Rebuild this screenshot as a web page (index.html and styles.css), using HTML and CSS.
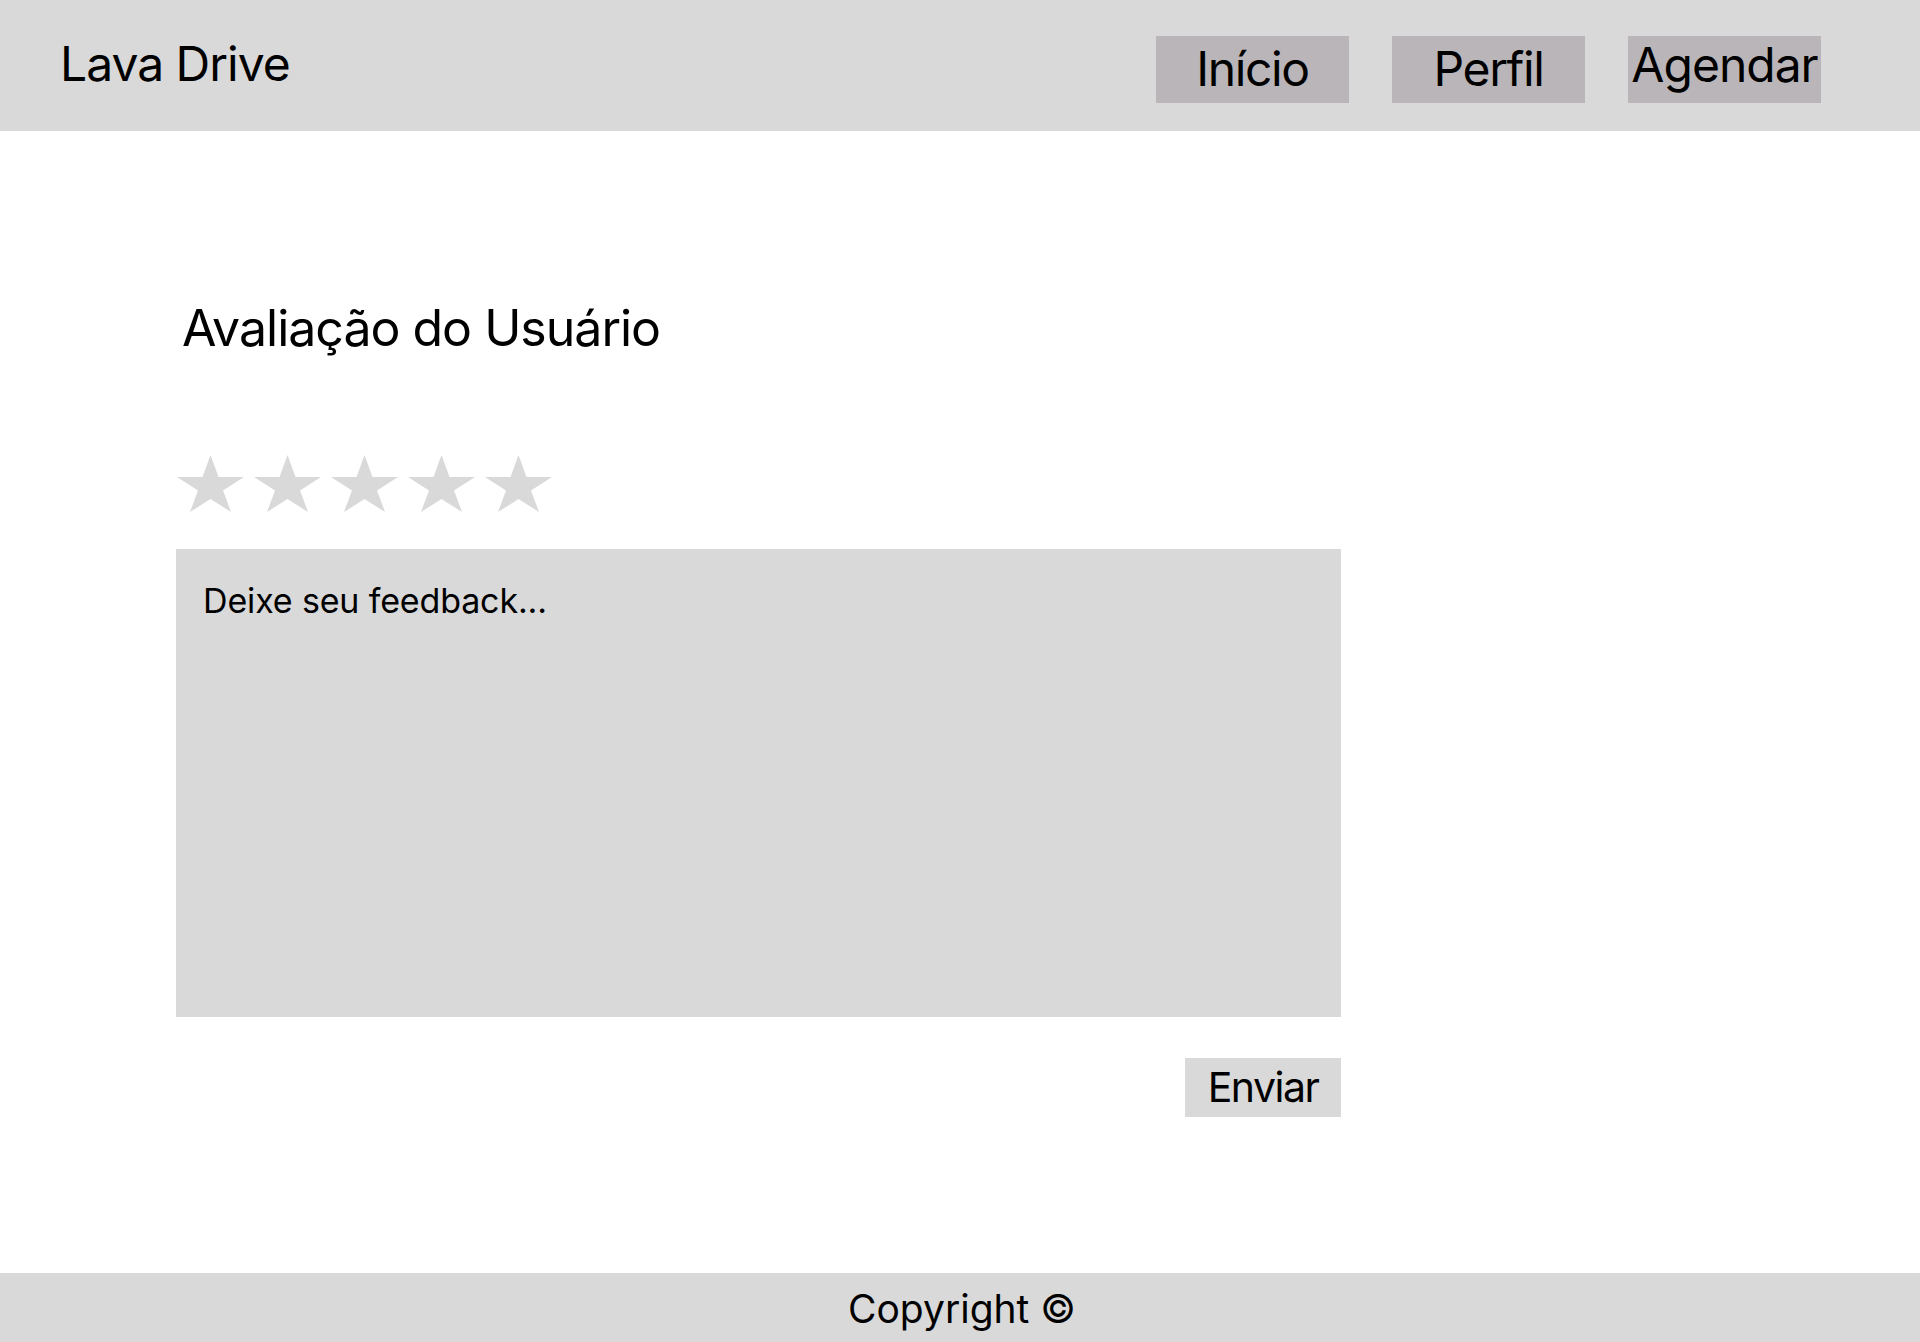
FILE: index.html
```html
<!DOCTYPE html>
<html lang="pt-BR">
<head>
<meta charset="utf-8">
<title>Lava Drive - Avaliação</title>
<link rel="stylesheet" href="styles.css">
</head>
<body>
<div class="page">
  <header class="topbar">
    <div class="logo">Lava Drive</div>
    <nav class="nav">
      <a class="nav-btn" href="#"><span class="nav-label">Início</span></a>
      <a class="nav-btn" href="#"><span class="nav-label">Perfil</span></a>
      <a class="nav-btn nav-btn--raised" href="#"><span class="nav-label">Agendar</span></a>
    </nav>
  </header>
  <main class="content">
    <h1 class="title">Avaliação do Usuário</h1>
    <div class="stars">
      <svg class="star" viewBox="0 0 67 57"><polygon points="33.5,0 41.5,22 67,22 46,35.5 54,57 33.5,44 13,57 21,35.5 0,22 25.5,22"/></svg>
      <svg class="star" viewBox="0 0 67 57"><polygon points="33.5,0 41.5,22 67,22 46,35.5 54,57 33.5,44 13,57 21,35.5 0,22 25.5,22"/></svg>
      <svg class="star" viewBox="0 0 67 57"><polygon points="33.5,0 41.5,22 67,22 46,35.5 54,57 33.5,44 13,57 21,35.5 0,22 25.5,22"/></svg>
      <svg class="star" viewBox="0 0 67 57"><polygon points="33.5,0 41.5,22 67,22 46,35.5 54,57 33.5,44 13,57 21,35.5 0,22 25.5,22"/></svg>
      <svg class="star" viewBox="0 0 67 57"><polygon points="33.5,0 41.5,22 67,22 46,35.5 54,57 33.5,44 13,57 21,35.5 0,22 25.5,22"/></svg>
    </div>
    <textarea class="feedback" placeholder="Deixe seu feedback..."></textarea>
    <div class="actions">
      <button class="send" type="button">Enviar</button>
    </div>
  </main>
  <footer class="footer">Copyright ©</footer>
</div>
</body>
</html>
```
FILE: styles.css
```css
* { box-sizing: border-box; }
html, body { margin: 0; padding: 0; }
body {
  font-family: Inter, "Noto Sans", sans-serif;
  color: #000;
  background: #fff;
}
.page {
  min-height: 1342px;
  display: flex;
  flex-direction: column;
}
.topbar {
  height: 131px;
  background: #d9d9d9;
  display: flex;
  align-items: flex-start;
  justify-content: space-between;
  padding: 0 99px 0 60px;
}
.logo {
  font-size: 48px;
  letter-spacing: -1px;
  line-height: 1.21;
  margin-top: 35px;
}
.nav {
  display: flex;
  gap: 43px;
  margin-top: 36px;
}
.nav-btn {
  width: 193px;
  height: 67px;
  background: #b9b5b8;
  color: #000;
  text-decoration: none;
  display: flex;
  justify-content: center;
  align-items: center;
}
.nav-label {
  font-size: 48px;
  line-height: 1;
  letter-spacing: -1.4px;
  white-space: nowrap;
  margin-bottom: 2px;
}
.nav-btn--raised .nav-label {
  letter-spacing: -1px;
  margin-bottom: 10px;
}
.content {
  flex: 1;
  padding-left: 176px;
  padding-top: 167px;
  width: 1341px;
}
.title {
  margin: 0 0 0 6px;
  font-size: 50px;
  font-weight: 400;
  letter-spacing: -1px;
  line-height: 1.21;
}
.stars {
  display: flex;
  gap: 10px;
  margin-top: 96px;
  margin-left: 1px;
}
.star {
  width: 67px;
  height: 57px;
  fill: #d9d9d9;
  display: block;
}
.feedback {
  display: block;
  width: 1165px;
  height: 468px;
  margin-top: 37px;
  background: #d9d9d9;
  border: none;
  border-radius: 0;
  outline: none;
  resize: none;
  padding: 31px 27px;
  font-family: Inter, "Noto Sans", sans-serif;
  font-size: 34px;
  letter-spacing: -0.15px;
  line-height: 1.21;
  color: #000;
}
.feedback::placeholder { color: #000; opacity: 1; }
.actions {
  display: flex;
  justify-content: flex-end;
  width: 1165px;
  margin-top: 41px;
}
.send {
  width: 156px;
  height: 59px;
  background: #d9d9d9;
  border: none;
  border-radius: 0;
  padding: 0;
  font-family: Inter, "Noto Sans", sans-serif;
  font-size: 41px;
  letter-spacing: -1.5px;
  color: #000;
  line-height: 1;
}
.footer {
  height: 69px;
  background: #d9d9d9;
  display: flex;
  justify-content: center;
  align-items: center;
  padding: 2px 0 0 4px;
  font-size: 39px;
  line-height: 1;
}
```
